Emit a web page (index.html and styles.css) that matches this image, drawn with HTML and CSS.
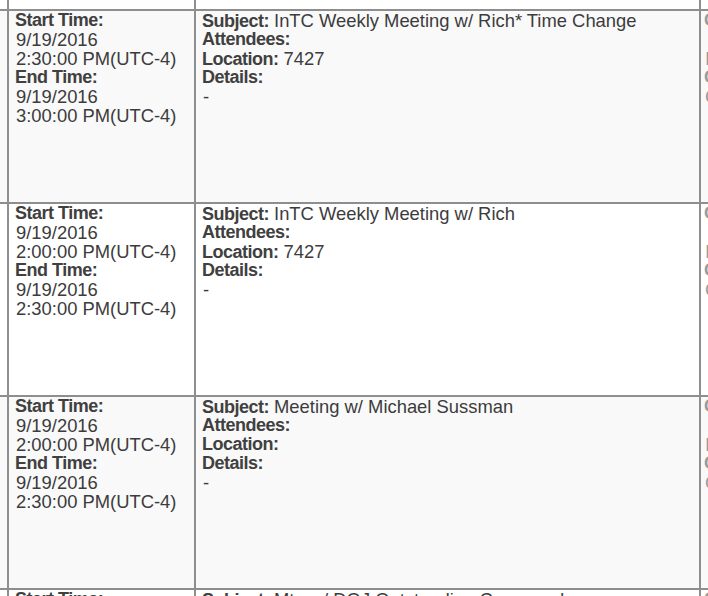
FILE: index.html
```html
<!DOCTYPE html>
<html>
<head>
<meta charset="utf-8">
<title>Calendar</title>
<link rel="stylesheet" href="styles.css">
</head>
<body>
<table class="cal">
  <tr class="row stub">
    <td class="c0"></td><td class="c1"></td><td class="c2"></td><td class="c3"></td>
  </tr>
  <tr class="row alt">
    <td class="c0"></td>
    <td class="c1">
      <div class="lbl">Start Time:</div>
      <div class="val">9/19/2016</div>
      <div class="val">2:30:00 PM(UTC-4)</div>
      <div class="lbl">End Time:</div>
      <div class="val">9/19/2016</div>
      <div class="val">3:00:00 PM(UTC-4)</div>
    </td>
    <td class="c2">
      <div class="ln"><span class="lbl">Subject:</span> <span class="val">InTC Weekly Meeting w/ Rich* Time Change</span></div>
      <div class="ln"><span class="lbl">Attendees:</span></div>
      <div class="ln"><span class="lbl">Location:</span> <span class="val">7427</span></div>
      <div class="ln"><span class="lbl">Details:</span></div>
      <div class="val">-</div>
    </td>
    <td class="c3">
      <div class="lbl">Calendar:</div>
      <div class="val">&nbsp;</div>
      <div class="val">Inbox</div>
      <div class="lbl">Created:</div>
      <div class="val">Conf</div>
    </td>
  </tr>
  <tr class="row">
    <td class="c0"></td>
    <td class="c1">
      <div class="lbl">Start Time:</div>
      <div class="val">9/19/2016</div>
      <div class="val">2:00:00 PM(UTC-4)</div>
      <div class="lbl">End Time:</div>
      <div class="val">9/19/2016</div>
      <div class="val">2:30:00 PM(UTC-4)</div>
    </td>
    <td class="c2">
      <div class="ln"><span class="lbl">Subject:</span> <span class="val">InTC Weekly Meeting w/ Rich</span></div>
      <div class="ln"><span class="lbl">Attendees:</span></div>
      <div class="ln"><span class="lbl">Location:</span> <span class="val">7427</span></div>
      <div class="ln"><span class="lbl">Details:</span></div>
      <div class="val">-</div>
    </td>
    <td class="c3">
      <div class="lbl">Calendar:</div>
      <div class="val">&nbsp;</div>
      <div class="val">Inbox</div>
      <div class="lbl">Created:</div>
      <div class="val">Conf</div>
    </td>
  </tr>
  <tr class="row alt">
    <td class="c0"></td>
    <td class="c1">
      <div class="lbl">Start Time:</div>
      <div class="val">9/19/2016</div>
      <div class="val">2:00:00 PM(UTC-4)</div>
      <div class="lbl">End Time:</div>
      <div class="val">9/19/2016</div>
      <div class="val">2:30:00 PM(UTC-4)</div>
    </td>
    <td class="c2">
      <div class="ln"><span class="lbl">Subject:</span> <span class="val">Meeting w/ Michael Sussman</span></div>
      <div class="ln"><span class="lbl">Attendees:</span></div>
      <div class="ln"><span class="lbl">Location:</span></div>
      <div class="ln"><span class="lbl">Details:</span></div>
      <div class="val">-</div>
    </td>
    <td class="c3">
      <div class="lbl">Calendar:</div>
      <div class="val">&nbsp;</div>
      <div class="val">Inbox</div>
      <div class="lbl">Created:</div>
      <div class="val">Conf</div>
    </td>
  </tr>
  <tr class="row">
    <td class="c0"></td>
    <td class="c1">
      <div class="lbl">Start Time:</div>
      <div class="val">9/19/2016</div>
    </td>
    <td class="c2">
      <div class="ln"><span class="lbl">Subject:</span> <span class="val">Mtg w/ DOJ Outstanding Commands</span></div>
    </td>
    <td class="c3">
      <div class="lbl">Calendar:</div>
    </td>
  </tr>
</table>
</body>
</html>
```

FILE: styles.css
```css
html, body {
  margin: 0;
  padding: 0;
  overflow: hidden;
  background: #ffffff;
}

body {
  font-family: "Liberation Sans", Arial, sans-serif;
  font-size: 18px;
  line-height: 19px;
  color: #3a3a3a;
}

.cal {
  border-collapse: separate;
  border-spacing: 0;
  table-layout: fixed;
  width: 1001px;
}

.cal td {
  box-sizing: border-box;
  vertical-align: top;
  padding: 0 0 0 6px;
  border-right: 2px solid #8e8e8e;
  border-bottom: 2px solid #8e8e8e;
  overflow: hidden;
  white-space: nowrap;
}

.row {
  height: 193px;
}

.row.stub {
  height: 11px;
}

.row.stub td {
  padding: 0;
}

.row.alt td {
  background: #f9f9f9;
}

.cal td.c0 {
  width: 9px;
  padding: 0;
}

.c1 { width: 187px; }
.c2 { width: 505px; }
.cal td.c3 { width: 300px; padding-left: 3px; }

.c3 .lbl,
.c3 .val {
  color: #9a9a9a;
}

div.lbl,
div.val,
.ln {
  height: 19px;
  overflow: visible;
}

.lbl {
  font-weight: bold;
  font-size: 18px;
  letter-spacing: -0.5px;
  color: #404040;
}

.val {
  font-size: 18.4px;
  color: #3c3c3c;
  padding-left: 1px;
}

span.val {
  padding-left: 0;
}
```
